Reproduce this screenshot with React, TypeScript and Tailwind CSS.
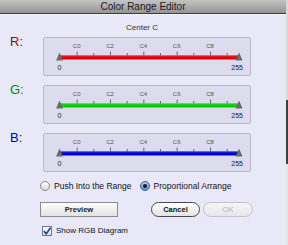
import React from "react";

type Channel = { name: string; labelColor: string; barColor: string; barLight: string };

const channels: Channel[] = [
  { name: "R:", labelColor: "text-[#a30000]", barColor: "#dd0000", barLight: "#f05050" },
  { name: "G:", labelColor: "text-[#008a00]", barColor: "#00cc00", barLight: "#50e050" },
  { name: "B:", labelColor: "text-[#00009a]", barColor: "#0000cc", barLight: "#5050e8" },
];

const ticks = Array.from({ length: 10 }, (_, i) => i + 1);
const majorLabels = ["C0", "C2", "C4", "C6", "C8"];

const SliderBox = ({ channel }: { channel: Channel }) => {
  // coordinates are relative to inside of the 1px border
  const x0 = 15.5;
  const x1 = 195;
  const step = 16.67;
  return (
    <div className="w-[208px] h-[39px] border border-[#b9b9cc] rounded-[2px] bg-[#dcdcee]">
      <svg width="206" height="37" viewBox="0 0 206 37">
        {majorLabels.map((l, i) => (
          <text
            key={l}
            x={16 + step * (i * 2 + 1)}
            y={10}
            fontSize="6"
            textAnchor="middle"
            fill="#555"
            fontFamily="Liberation Sans, Arial, sans-serif"
          >
            {l}
          </text>
        ))}
        {ticks.map((k) => (
          <line
            key={k}
            x1={16 + step * k + 0.5}
            x2={16 + step * k + 0.5}
            y1={k % 2 === 1 ? 13.5 : 15}
            y2={17.5}
            stroke="#666"
            strokeWidth="1"
          />
        ))}
        <rect x={x0} y={17.5} width={x1 - x0} height={4} fill={channel.barColor} />
        <rect x={x0} y={17.5} width={x1 - x0} height={1} fill={channel.barLight} opacity="0.6" />
        <polygon points={`${x0 - 3.5},22.5 ${x0},14.5 ${x0 + 3.5},22.5`} fill="#6a6a6a" />
        <polygon points={`${x1 - 3.5},22.5 ${x1},14.5 ${x1 + 3.5},22.5`} fill="#6a6a6a" />
        <text x={x0} y={32} fontSize="7" textAnchor="middle" fill="#222" fontFamily="Liberation Sans, Arial, sans-serif">
          0
        </text>
        <text x={199} y={32} fontSize="7" textAnchor="end" fill="#222" fontFamily="Liberation Sans, Arial, sans-serif">
          255
        </text>
      </svg>
    </div>
  );
};

const Radio = ({ checked }: { checked: boolean }) =>
  checked ? (
    <span className="w-[10px] h-[10px] rounded-full border border-[#3a5f8c] bg-gradient-to-b from-[#a9d2f5] to-[#4f93d8] flex items-center justify-center">
      <span className="w-[4px] h-[4px] rounded-full bg-[#1a1a2a]" />
    </span>
  ) : (
    <span className="w-[10px] h-[10px] rounded-full border border-[#8a8a8a] bg-gradient-to-b from-[#ffffff] to-[#d8d8d8]" />
  );

export default function App() {
  return (
    <div className="flex w-[288px] h-[245px] font-['Liberation_Sans',Arial,sans-serif] overflow-hidden">
      <div className="w-[286px] h-full flex flex-col bg-[#e8e8f9]">
        <div className="h-[14px] shrink-0 bg-gradient-to-b from-[#c4c4c4] to-[#959595] border-b border-[#3c3c3c] flex items-center justify-center">
          <span className="text-[10px] leading-[10px] text-[#1a1a1a]">Color Range Editor</span>
        </div>
        <div className="h-px bg-[#f4f4ff]" />

        <div className="mt-[9px] text-center text-[8px] leading-[8px] text-[#333] pr-[2px]">Center C</div>

        <div className="mt-[5px] flex flex-col gap-[9px]">
          {channels.map((c) => (
            <div key={c.name} className="flex pl-[10px]">
              <div className={`w-[33px] -mt-[2px] text-[13px] leading-[13px] ${c.labelColor}`}>{c.name}</div>
              <SliderBox channel={c} />
            </div>
          ))}
        </div>

        <div className="mt-[9px] pl-[40px] flex items-center text-[8.5px] leading-[10px] text-[#111]">
          <Radio checked={false} />
          <span className="ml-[4px]">Push Into the Range</span>
          <span className="ml-[8px]">
            <Radio checked={true} />
          </span>
          <span className="ml-[4px]">Proportional Arrange</span>
        </div>

        <div className="mt-[11px] pl-[40px] flex items-center">
          <div className="w-[78px] h-[15px] border border-[#8c8c8c] bg-gradient-to-b from-[#fdfdfd] to-[#e2e2e2] flex items-center justify-center text-[7.5px] font-bold text-[#222]">
            Preview
          </div>
          <div className="ml-[33px] w-[49px] h-[15px] rounded-full border border-[#4a4a4a] bg-gradient-to-b from-[#ffffff] to-[#e4e4e4] flex items-center justify-center text-[7.5px] font-bold text-[#111]">
            Cancel
          </div>
          <div className="ml-[3px] w-[50px] h-[15px] rounded-full border border-[#c2c2c8] bg-gradient-to-b from-[#f6f6f8] to-[#e6e6ec] flex items-center justify-center text-[7.5px] text-[#b4b4bc]">
            OK
          </div>
        </div>

        <div className="mt-[9px] pl-[42px] flex items-center">
          <span className="w-[10px] h-[10px] border border-[#6b7a90] bg-gradient-to-b from-[#ffffff] to-[#d6def0] flex items-center justify-center">
            <svg width="9" height="9" viewBox="0 0 9 9">
              <path d="M1.5 4.5 L3.6 7.2 L8 0.8" fill="none" stroke="#1f3f8f" strokeWidth="1.8" strokeLinecap="round" strokeLinejoin="round" />
            </svg>
          </span>
          <span className="ml-[4px] text-[8px] leading-[10px] text-[#111]">Show RGB Diagram</span>
        </div>
      </div>
      <div className="w-[2px] h-full flex flex-col">
        <div className="h-[100px] bg-[#d8d8d8]" />
        <div className="h-[64px] bg-[#3e4434]" />
        <div className="flex-1 bg-[#e4e4e4]" />
      </div>
    </div>
  );
}
